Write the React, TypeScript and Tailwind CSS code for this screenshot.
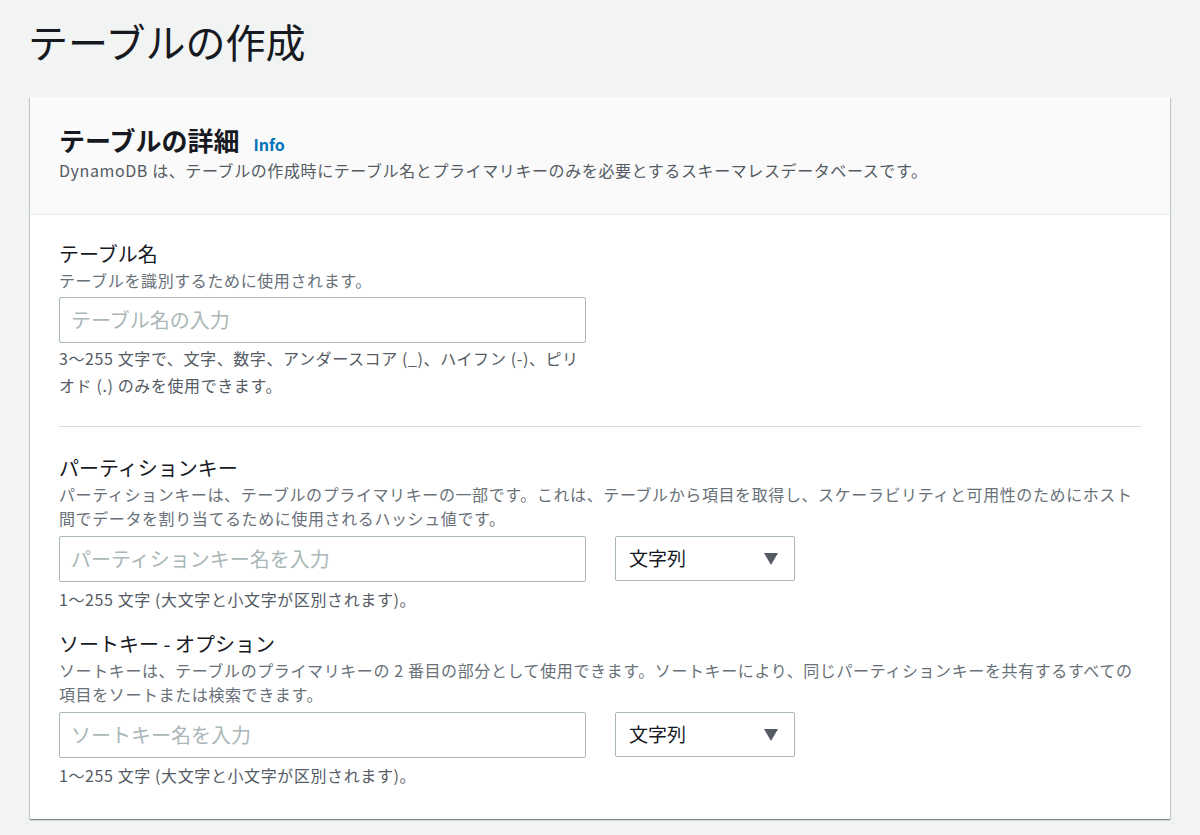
export default function App() {
  const font = { fontFamily: '"Noto Sans CJK JP", "Noto Sans", sans-serif' };
  const Select = () => (
    <div className="w-[180px] h-[45px] border border-[#aab7b8] rounded-[2px] bg-white flex items-center justify-between pl-[13px] pr-[16px] text-[19px] text-[#16191f]">
      <span>文字列</span>
      <svg width="14" height="12" viewBox="0 0 14 12"><path d="M0 0h14L7 12z" fill="#545b64" /></svg>
    </div>
  );
  const Input = ({ ph }: { ph: string }) => (
    <div className="w-[527px] h-[46px] border border-[#aab7b8] rounded-[2px] bg-white flex items-center px-[11px] text-[20px] text-[#aab7b8]">{ph}</div>
  );
  return (
    <div style={font} className="w-[1200px] h-[835px] bg-[#f2f3f3] text-[#16191f] overflow-hidden">
      <h1 className="text-[40px] leading-[48px] pl-[28px] pt-[17px] h-[97px]">テーブルの作成</h1>
      <div className="mx-[30px] bg-white shadow-[0_1px_1px_0_rgba(0,28,36,0.3),1px_1px_1px_0_rgba(0,28,36,0.15),-1px_1px_1px_0_rgba(0,28,36,0.15)] h-[722px]">
        <div className="bg-[#fafafa] border-b border-[#eaeded] h-[118px] px-[29px] pt-[25px]">
          <div className="flex items-baseline gap-[14px]">
            <span className="text-[26px] font-bold leading-[36px]">テーブルの詳細</span>
            <span className="text-[16px] font-bold text-[#0073bb]">Info</span>
          </div>
          <p className="text-[16px] tracking-[0.6px] text-[#545b64] leading-[24px]">DynamoDB は、テーブルの作成時にテーブル名とプライマリキーのみを必要とするスキーマレスデータベースです。</p>
        </div>
        <div className="px-[29px] pt-[25px]">
          <div className="text-[20px] leading-[28px]">テーブル名</div>
          <div className="text-[16px] tracking-[0.6px] text-[#687078] leading-[24px]">テーブルを識別するために使用されます。</div>
          <div className="mt-[5px]"><Input ph="テーブル名の入力" /></div>
          <div className="text-[16px] tracking-[0.6px] text-[#545b64] leading-[27px] w-[525px] mt-[2px]">3〜255 文字で、文字、数字、アンダースコア (_)、ハイフン (-)、ピリオド (.) のみを使用できます。</div>
          <div className="border-t border-[#d5dbdb] mt-[27px] mb-[27px]" />
          <div className="text-[20px] leading-[28px]">パーティションキー</div>
          <div className="text-[16px] tracking-[0.6px] text-[#687078] leading-[24px]">パーティションキーは、テーブルのプライマリキーの一部です。これは、テーブルから項目を取得し、スケーラビリティと可用性のためにホスト間でデータを割り当てるために使用されるハッシュ値です。</div>
          <div className="flex gap-[29px] mt-[6px]"><Input ph="パーティションキー名を入力" /><Select /></div>
          <div className="text-[16px] tracking-[0.6px] text-[#545b64] leading-[27px] mt-[4px]">1〜255 文字 (大文字と小文字が区別されます)。</div>
          <div className="text-[20px] leading-[28px] mt-[17px]">ソートキー - オプション</div>
          <div className="text-[16px] tracking-[0.6px] text-[#687078] leading-[24px]">ソートキーは、テーブルのプライマリキーの 2 番目の部分として使用できます。ソートキーにより、同じパーティションキーを共有するすべての項目をソートまたは検索できます。</div>
          <div className="flex gap-[29px] mt-[6px]"><Input ph="ソートキー名を入力" /><Select /></div>
          <div className="text-[16px] tracking-[0.6px] text-[#545b64] leading-[27px] mt-[4px]">1〜255 文字 (大文字と小文字が区別されます)。</div>
        </div>
      </div>
    </div>
  );
}
